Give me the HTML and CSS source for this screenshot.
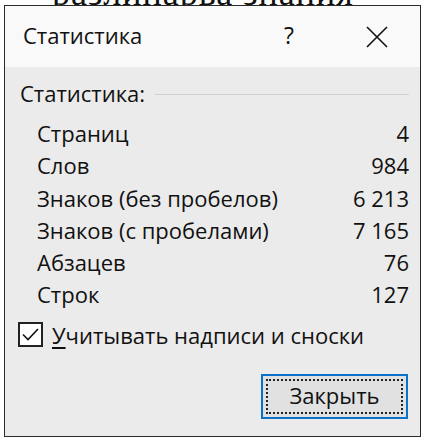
FILE: index.html
```html
<!DOCTYPE html>
<html lang="ru">
<head>
<meta charset="utf-8">
<link rel="stylesheet" href="styles.css">
</head>
<body>
<div class="doc">
  <p class="doc-line">разлинарва знания</p>
</div>
<div class="dialog">
  <div class="titlebar">
    <span class="title">Статистика</span>
    <span class="help">?</span>
    <svg class="close" width="22" height="22" viewBox="0 0 22 22"><path d="M1 1L21 21M21 1L1 21" stroke="#111" stroke-width="1.6" fill="none"/></svg>
  </div>
  <div class="body">
    <div class="group-head">
      <span class="group-label">Статистика:</span>
      <span class="group-line"></span>
    </div>
    <div class="rows">
      <div class="row"><span>Страниц</span><span>4</span></div>
      <div class="row"><span>Слов</span><span>984</span></div>
      <div class="row"><span>Знаков (без пробелов)</span><span>6 213</span></div>
      <div class="row"><span>Знаков (с пробелами)</span><span>7 165</span></div>
      <div class="row"><span>Абзацев</span><span>76</span></div>
      <div class="row"><span>Строк</span><span>127</span></div>
    </div>
    <label class="check">
      <span class="box"><svg width="17" height="13" viewBox="0 0 17 13"><path d="M1 6.5L6 11.5L16 1" stroke="#111" stroke-width="1.6" fill="none"/></svg></span>
      <span class="check-text"><u>У</u>читывать надписи и сноски</span>
    </label>
    <div class="actions">
      <button class="btn"><span class="focus">Закрыть</span></button>
    </div>
  </div>
</div>
</body>
</html>
```
FILE: styles.css
```css
html, body {
  margin: 0;
  padding: 0;
  background: #ffffff;
  width: 426px;
  height: 442px;
  overflow: hidden;
  font-family: "Open Sans", "Noto Sans", sans-serif;
  color: #111;
}
.doc {
  position: relative;
}
.doc-line {
  margin: 0;
  padding-left: 52px;
  margin-top: -24px;
  font-family: "Liberation Serif", serif;
  font-size: 36px;
  line-height: 34px;
  letter-spacing: 1px;
  color: #111;
}
.dialog {
  position: absolute;
  left: 4px;
  top: 5px;
  width: 415px;
  height: 430px;
  border: 1px solid #2a2a2a;
  background: #ebebeb;
  display: flex;
  flex-direction: column;
}
.titlebar {
  height: 61px;
  background: #f9f9f9;
  display: flex;
  align-items: center;
  padding-left: 18px;
  box-sizing: border-box;
}
.title {
  font-size: 22px;
  flex: 1;
  padding-bottom: 3px;
}
.help {
  font-size: 23px;
  width: 20px;
  margin-right: 62px;
  padding-bottom: 3px;
}
.close {
  margin-right: 32px;
}
.body {
  flex: 1;
  display: flex;
  flex-direction: column;
  padding: 12px 11px 0 15px;
  font-size: 22px;
}
.group-head {
  display: flex;
  align-items: center;
  height: 28px;
}
.group-label {
  margin-right: 10px;
}
.group-line {
  flex: 1;
  height: 1px;
  background: #cfcfcf;
  margin-top: 2px;
}
.rows {
  margin-top: 10px;
  padding-left: 17px;
}
.row {
  display: flex;
  justify-content: space-between;
  height: 32.3px;
  line-height: 32px;
}
.check {
  display: flex;
  align-items: center;
  margin-top: 9px;
  margin-left: -2px;
  height: 30px;
}
.box {
  width: 21px;
  height: 21px;
  border: 2px solid #222;
  background: #fff;
  display: flex;
  align-items: center;
  justify-content: center;
  margin-right: 9px;
}
.check-text u {
  text-decoration-thickness: 2px;
  text-underline-offset: 3px;
}
.actions {
  display: flex;
  justify-content: flex-end;
  margin-top: 24px;
  padding-right: 1px;
}
.btn {
  width: 147px;
  height: 45px;
  border: 2px solid #0a73c9;
  background: #e1e1e1;
  padding: 3px;
  box-sizing: border-box;
  font-family: inherit;
  font-size: 22px;
  color: #111;
  display: flex;
}
.focus {
  flex: 1;
  border: 2px dotted #222;
  display: flex;
  align-items: center;
  justify-content: center;
  padding-bottom: 2px;
}
```
